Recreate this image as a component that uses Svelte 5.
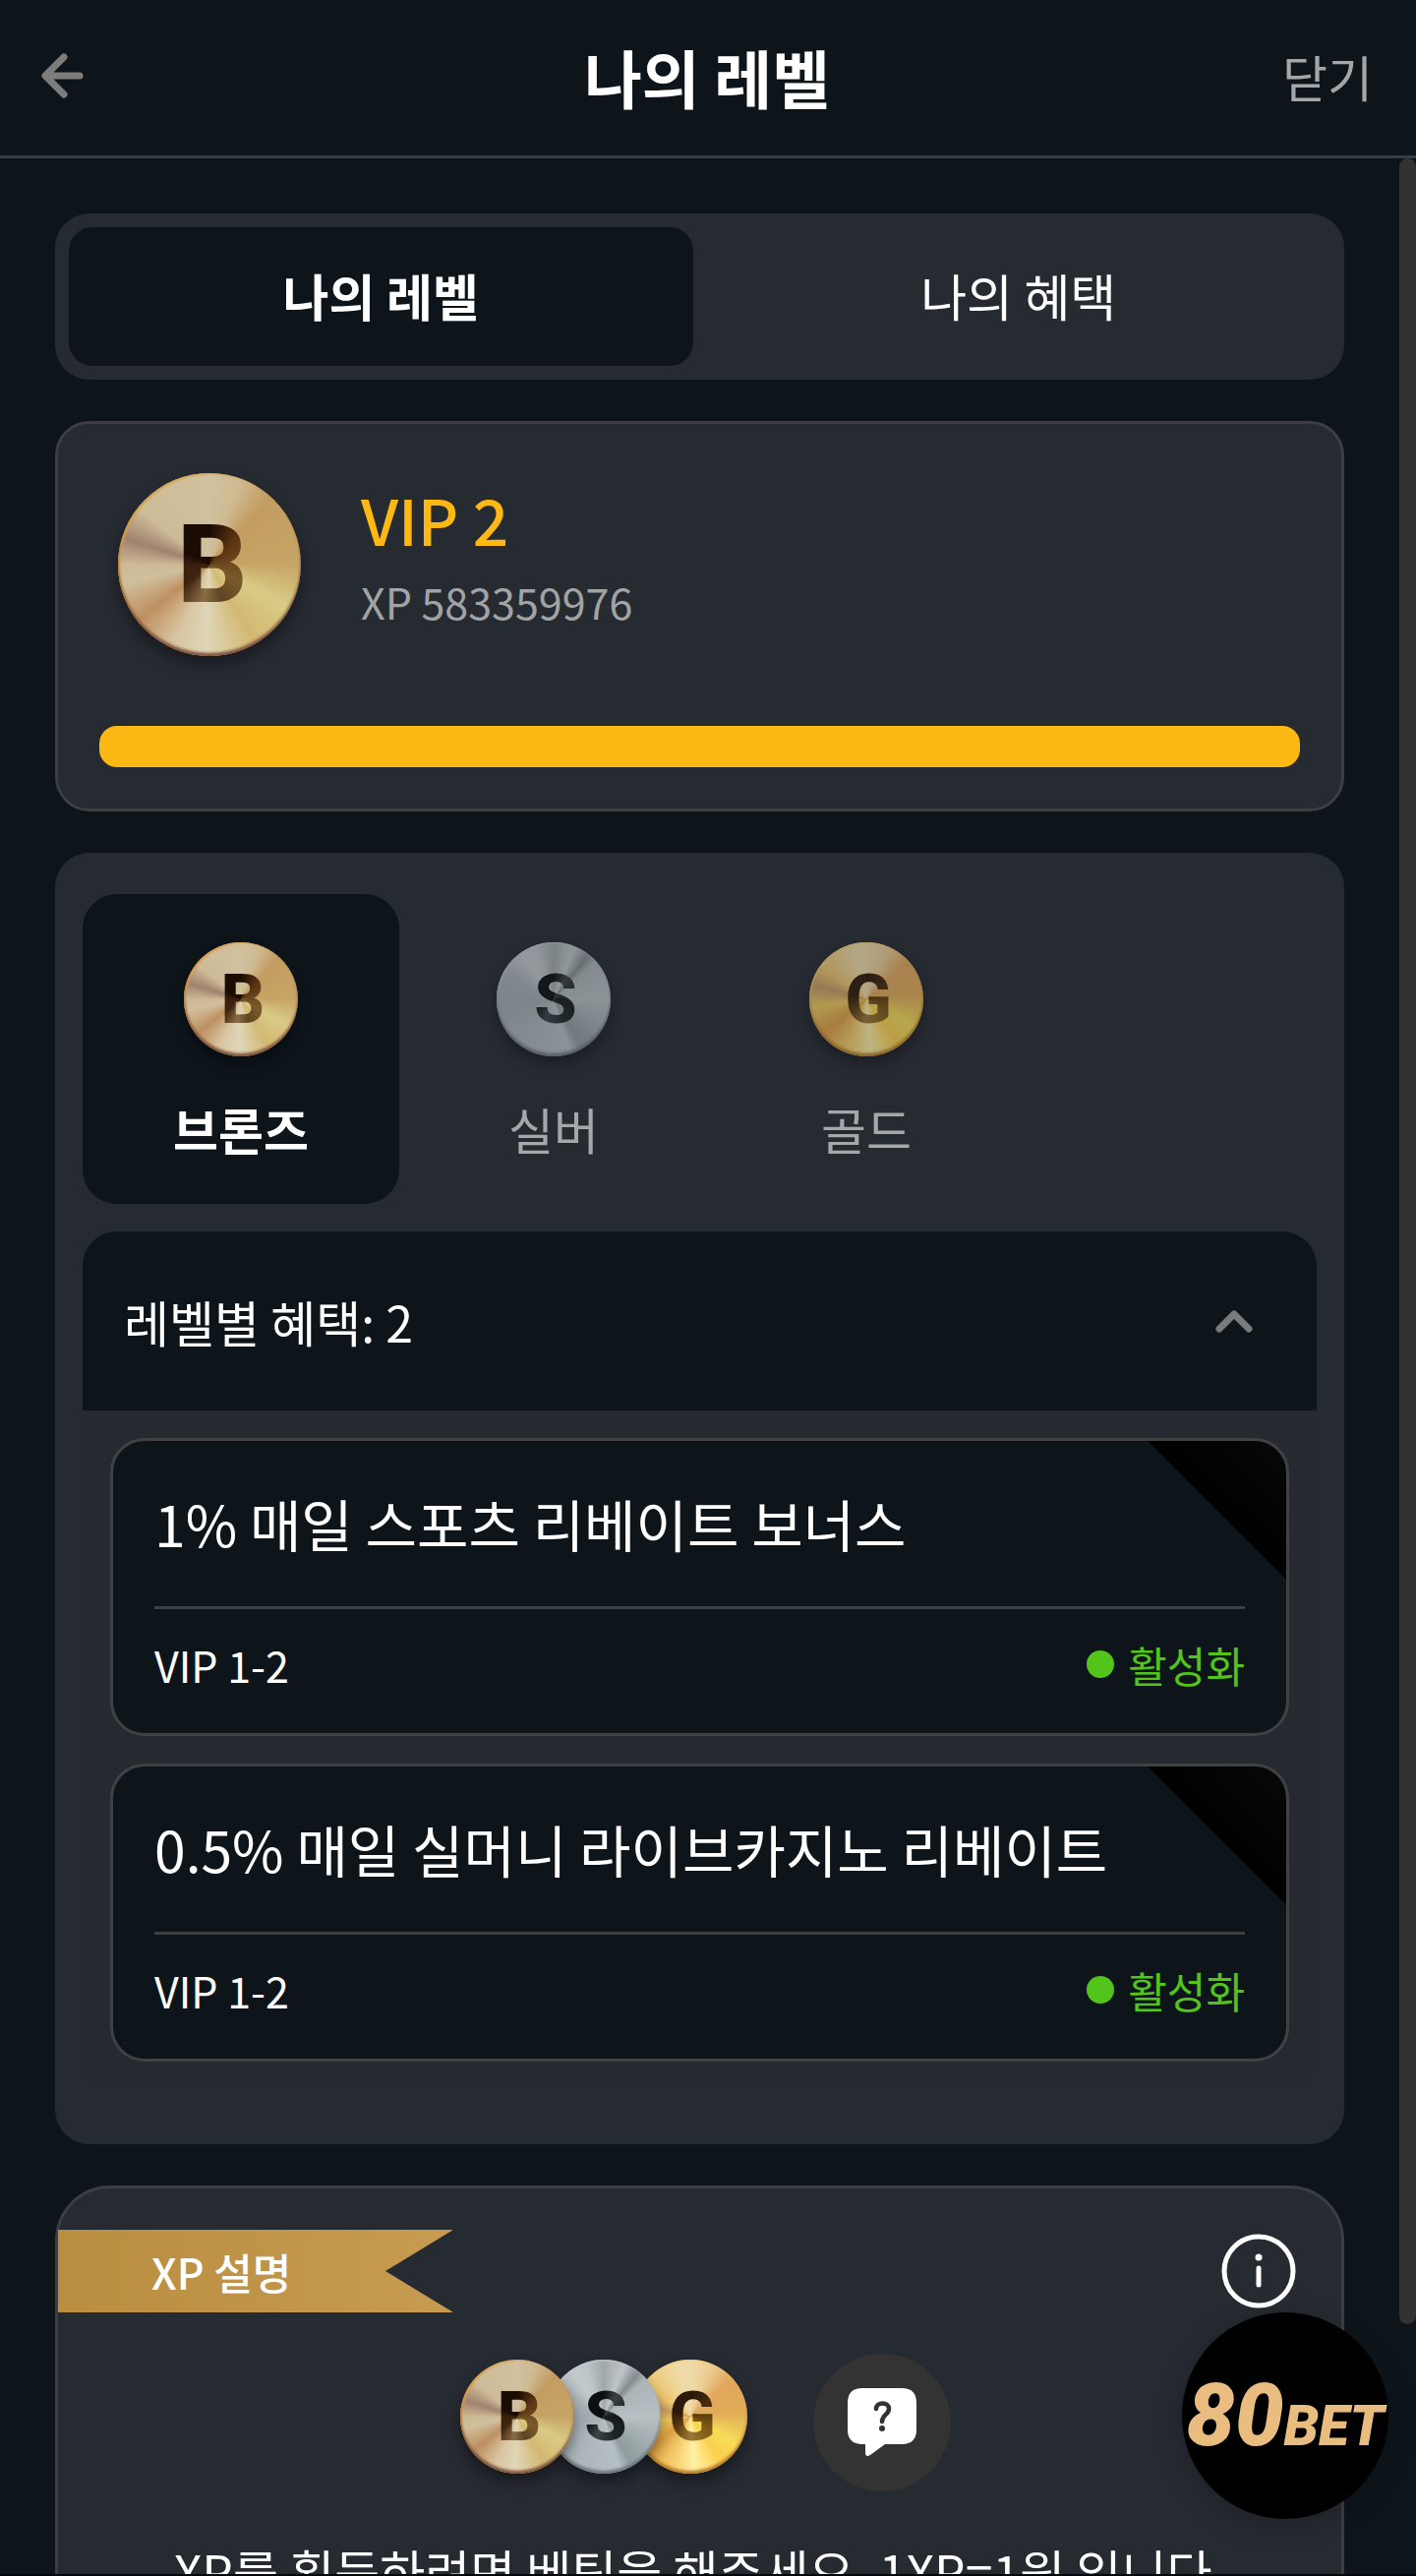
<script>
  const tiers = [
    { kind: 'bronze', letter: 'B', label: '브론즈' },
    { kind: 'silver', letter: 'S', label: '실버' },
    { kind: 'gold', letter: 'G', label: '골드' }
  ];
  const benefits = [
    { title: '1% 매일 스포츠 리베이트 보너스', range: 'VIP 1-2', status: '활성화' },
    { title: '0.5% 매일 실머니 라이브카지노 리베이트', range: 'VIP 1-2', status: '활성화' }
  ];
  let tab = $state('level');
  let tier = $state('bronze');
  let open = $state(true);
</script>

{#snippet coin(kind, letter, size)}
  <span class="coin {kind} {size}" aria-hidden="true">
    <span class="disc"><span class="letter">{letter}</span></span>
  </span>
{/snippet}

<div class="app">
  <header class="topbar">
    <button class="back" aria-label="뒤로">
      <svg width="44" height="46" viewBox="0 0 44 46" fill="none" stroke="currentColor" stroke-width="7" stroke-linecap="round" stroke-linejoin="round">
        <path d="M23 4 L4 23 L23 42 M5 23 H39" />
      </svg>
    </button>
    <h1>나의 레벨</h1>
    <button class="close">닫기</button>
  </header>

  <div class="body">
    <main>
      <div class="tabs" role="tablist">
        <button role="tab" aria-selected={tab === 'level'} class:active={tab === 'level'} onclick={() => (tab = 'level')}>나의 레벨</button>
        <button role="tab" aria-selected={tab === 'benefit'} class:active={tab === 'benefit'} onclick={() => (tab = 'benefit')}>나의 혜택</button>
      </div>

      <section class="vip">
        <div class="vip-head">
          {@render coin('bronze', 'B', 'lg')}
          <div class="vip-text">
            <h2>VIP 2</h2>
            <p>XP 583359976</p>
          </div>
        </div>
        <div class="bar"></div>
      </section>

      <section class="levels">
        <div class="tiers">
          {#each tiers as t}
            <button class="tier" class:active={tier === t.kind} onclick={() => (tier = t.kind)}>
              {@render coin(t.kind, t.letter, 'sm')}
              <span class="tier-label">{t.label}</span>
            </button>
          {/each}
        </div>
        <div class="accordion">
          <button class="acc-head" aria-expanded={open} onclick={() => (open = !open)}>
            <span>레벨별 혜택: 2</span>
            <svg width="38" height="24" viewBox="0 0 38 24" fill="none" stroke="currentColor" stroke-width="7" stroke-linecap="round" stroke-linejoin="round">
              <path d="M4 20 L19 5 L34 20" />
            </svg>
          </button>
          {#if open}
            <div class="acc-body">
              {#each benefits as b}
                <article class="benefit">
                  <h3>{b.title}</h3>
                  <div class="meta">
                    <span class="range">{b.range}</span>
                    <span class="status"><i class="dot"></i>{b.status}</span>
                  </div>
                </article>
              {/each}
            </div>
          {/if}
        </div>
      </section>

      <section class="xp">
        <div class="xp-head">
          <h2 class="ribbon">XP 설명</h2>
          <button class="info" aria-label="정보">
            <svg width="76" height="76" viewBox="0 0 76 76" fill="none" stroke="currentColor" stroke-linecap="round">
              <circle cx="38" cy="38" r="35" stroke-width="5" />
              <path d="M38 35 V52" stroke-width="5" />
              <circle cx="38" cy="24" r="3.5" fill="currentColor" stroke="none" />
            </svg>
          </button>
        </div>
        <div class="xp-row">
          <div class="stack">
            {#each tiers as t}
              {@render coin(t.kind, t.letter, 'sm')}
            {/each}
          </div>
          <button class="help" aria-label="도움말">
            <svg width="70" height="70" viewBox="0 0 70 70">
              <path d="M15 0 H55 Q70 0 70 15 V42 Q70 57 55 57 H38 L23 68 Q18 71 18 65 V57 H15 Q0 57 0 42 V15 Q0 0 15 0 Z" fill="#fff" />
              <path d="M29 21 C29 13.500 42 13.500 42 21 C42 27 35 27 35 34" fill="none" stroke="#333" stroke-width="4.500" stroke-linecap="round" />
              <circle cx="35" cy="41" r="3" fill="#333" />
            </svg>
          </button>
        </div>
        <p class="xp-text">XP를 획득하려면 베팅을 해주세요. 1XP=1원 입니다.</p>
      </section>
    </main>
    <div class="track"><div class="thumb"></div></div>
  </div>

  <button class="float" aria-label="80BET"><span class="num">80</span><span class="bet">BET</span></button>
</div>

<style>
  :global(body) {
    background: #0d151b;
  }
  .app {
    position: relative;
    box-sizing: border-box;
    height: 100vh;
    display: flex;
    flex-direction: column;
    overflow: hidden;
    border-bottom: 2px solid #05080b;
    background: #0d151b;
    color: #fff;
    font-family: 'Noto Sans CJK KR', sans-serif;
  }
  h1, h2, h3, p {
    margin: 0;
  }
  button {
    margin: 0;
    padding: 0;
    border: 0;
    background: none;
    color: inherit;
    font: inherit;
    cursor: pointer;
  }
  svg {
    display: block;
  }
  .topbar {
    flex: none;
    box-sizing: border-box;
    display: grid;
    grid-template-columns: 1fr auto 1fr;
    align-items: center;
    height: 161px;
    padding: 0 44px 5px 42px;
    border-bottom: 3px solid #3a3d40;
  }
  .back {
    justify-self: start;
    color: #7d7d7d;
  }
  h1 {
    font-size: 64px;
    line-height: 84px;
    font-weight: 700;
  }
  .close {
    justify-self: end;
    color: #a6a6a6;
    font-size: 50px;
    line-height: 70px;
  }
  .body {
    flex: 1;
    min-height: 0;
    display: flex;
  }
  main {
    flex: 1;
    min-width: 0;
    display: flex;
    flex-direction: column;
    gap: 42px;
    padding: 56px 56px 0;
    overflow: hidden;
  }
  main > * {
    flex: none;
  }
  .track {
    flex: none;
    width: 17px;
  }
  .thumb {
    height: 2202px;
    border-radius: 9px;
    background: #323232;
  }
  .tabs {
    display: flex;
    gap: 14px;
    padding: 14px;
    border-radius: 35px;
    background: #262a31;
  }
  .tabs button {
    flex: 1;
    height: 141px;
    padding-bottom: 4px;
    border-radius: 24px;
    font-size: 51px;
    line-height: 70px;
  }
  .tabs .active {
    background: #0d151b;
    font-weight: 700;
  }
  .vip {
    padding: 31px 42px 42px;
    border: 3px solid #3c3e41;
    border-radius: 35px;
    background: #262a31;
  }
  .vip-head {
    display: flex;
    align-items: center;
    gap: 42px;
    margin-bottom: 52px;
  }
  .vip-text {
    padding-bottom: 10px;
  }
  .vip h2 {
    color: #fdb813;
    font-size: 64px;
    line-height: 84px;
    font-weight: 500;
  }
  .vip p {
    color: #a2a3a5;
    font-size: 43px;
    line-height: 84px;
  }
  .bar {
    height: 42px;
    border-radius: 18px;
    background: #fdb813;
  }
  .levels {
    display: flex;
    flex-direction: column;
    gap: 28px;
    padding: 42px 28px 56px;
    border-radius: 35px;
    background: #262a31;
  }
  .tiers {
    display: grid;
    grid-template-columns: 322px 314px 322px;
  }
  .tier {
    display: flex;
    flex-direction: column;
    align-items: center;
    gap: 26px;
    padding: 37px 0 42px;
    border-radius: 35px;
    font-size: 50px;
    line-height: 70px;
    color: #a6a7a9;
  }
  .tier .coin {
    opacity: 0.7;
  }
  .tier.active {
    background: #0d151b;
    color: #fff;
    font-weight: 700;
  }
  .tier.active .coin {
    opacity: 1;
  }
  .accordion {
    border-radius: 35px;
    overflow: hidden;
    background: #262a30;
  }
  .acc-head {
    display: flex;
    align-items: center;
    justify-content: space-between;
    width: 100%;
    height: 182px;
    padding: 0 65px 0 42px;
    background: #0d151b;
    font-size: 50px;
    line-height: 70px;
  }
  .acc-head svg {
    color: #7a7a7a;
  }
  .acc-body {
    display: flex;
    flex-direction: column;
    gap: 28px;
    padding: 28px;
  }
  .benefit {
    padding: 0 42px 14px;
    border: 3px solid #3f4142;
    border-radius: 35px;
    background: linear-gradient(225deg, #080808 0, #000 99px, transparent 100px), #0d151b;
    background-clip: padding-box;
  }
  h3 {
    padding: 41px 0 43px;
    border-bottom: 3px solid #3d3f41;
    font-size: 57px;
    line-height: 84px;
    font-weight: 400;
  }
  .meta {
    display: flex;
    align-items: center;
    justify-content: space-between;
    height: 112px;
    font-size: 43px;
    line-height: 63px;
  }
  .status {
    display: flex;
    align-items: center;
    gap: 14px;
    color: #52c41a;
  }
  .dot {
    width: 28px;
    height: 28px;
    border-radius: 50%;
    background: #52c41a;
  }
  .xp {
    padding: 42px 0;
    border: 3px solid #3c3e41;
    border-radius: 56px;
    background: #262a31;
  }
  .xp-head {
    display: flex;
    align-items: center;
    justify-content: space-between;
    padding-right: 46px;
  }
  .ribbon {
    width: 307px;
    padding-left: 95px;
    background: linear-gradient(90deg, #b98e41, #c79b50);
    clip-path: polygon(0 0, 100% 0, 333px 50%, 100% 100%, 0 100%);
    font-size: 43px;
    line-height: 84px;
    font-weight: 500;
  }
  .xp-row {
    display: flex;
    justify-content: center;
    gap: 55px;
    margin-top: 42px;
  }
  .stack {
    display: flex;
    align-items: center;
    height: 128px;
  }
  .stack .coin + .coin {
    margin-left: -52px;
  }
  .stack .bronze {
    z-index: 3;
  }
  .stack .silver {
    z-index: 2;
  }
  .help {
    display: flex;
    align-items: center;
    justify-content: center;
    width: 140px;
    height: 140px;
    border-radius: 50%;
    background: #333;
  }
  .xp-text {
    margin-top: 42px;
    font-size: 50px;
    line-height: 77px;
    text-align: center;
    white-space: nowrap;
  }
  .coin {
    position: relative;
    flex: none;
    display: flex;
    align-items: center;
    justify-content: center;
  }
  .coin.sm {
    width: 140px;
    height: 140px;
    font-size: 70px;
  }
  .coin.lg {
    width: 224px;
    height: 224px;
    font-size: 111px;
  }
  .disc {
    display: flex;
    align-items: center;
    justify-content: center;
    width: 83%;
    height: 83%;
    border-radius: 50%;
  }
  .letter {
    padding-left: 4px;
    font-family: Roboto, sans-serif;
    font-weight: 800;
    line-height: 1;
    color: transparent;
    background-clip: text;
  }
  .lg .letter {
    padding-left: 6px;
  }
  .bronze .disc {
    background: conic-gradient(#d0c19f 0deg, #cfba91 20deg, #c39c62 42deg, #c7a565 90deg, #d8cb85 118deg, #d3b973 150deg, #dfd6b8 182deg, #d8c4a0 205deg, #be9060 232deg, #d0bf9d 258deg, #cdb995 270deg, #a1826f 287deg, #cdbb97 308deg, #d0c19f 360deg);
    box-shadow: inset 0 -3px 3px #7d4f38, inset 2px 1px 2px #d9a04a, 0 8px 14px rgba(0, 0, 0, 0.4);
  }
  .bronze .letter {
    background-image: conic-gradient(#1a0c03 0deg, #5c3413 45deg, #7a5a2a 120deg, #5e4523 160deg, #8a6d45 190deg, #3f2410 230deg, #3a200d 270deg, #1a0c03 300deg);
  }
  .silver .disc {
    background: conic-gradient(#a0a8ab 0deg, #bfc5c8 22deg, #848c8f 38deg, #abb4b7 48deg, #b8c0c3 90deg, #98a4a6 135deg, #909b9e 150deg, #b6c0c4 163deg, #adb6bb 210deg, #a2acb1 270deg, #a9b2b6 300deg, #c2c8cb 325deg, #bec5c8 340deg, #a0a8ab 360deg);
    box-shadow: inset 0 -3px 3px #69757b, inset 1px 1px 2px #c3cace, 0 8px 14px rgba(0, 0, 0, 0.4);
  }
  .silver .letter {
    background-image: conic-gradient(#0d1011 0deg, #3b4143 30deg, #15191a 90deg, #1f2526 150deg, #3c4446 200deg, #0d1011 250deg);
  }
  .gold .disc {
    background: conic-gradient(#efdba8 0deg, #ebcd94 22deg, #e1a75c 48deg, #e2ac58 85deg, #f6dd58 120deg, #fbd04c 145deg, #fff0a6 175deg, #f6cf6e 200deg, #dea044 232deg, #efc85c 262deg, #c49c66 285deg, #edc56c 305deg, #efdba8 345deg);
    box-shadow: inset 0 -3px 3px #b37a25, inset 1px 1px 2px #f3d17a, 0 8px 14px rgba(0, 0, 0, 0.4);
  }
  .gold .letter {
    background-image: conic-gradient(#261608 0deg, #4b2d0c 60deg, #7a5612 120deg, #9a7735 180deg, #5c3a10 230deg, #2c190a 290deg);
  }
  /* Support launcher floating above the page */
  .float {
    position: absolute;
    right: 28px;
    bottom: 56px;
    display: flex;
    align-items: baseline;
    justify-content: center;
    width: 210px;
    height: 210px;
    border-radius: 50%;
    background: #000;
    box-shadow: 0 7px 28px rgba(0, 0, 0, 0.2);
    color: #e9bd80;
    font-family: Roboto, sans-serif;
    font-style: italic;
    font-weight: 900;
    line-height: 210px;
    white-space: nowrap;
  }
  .num {
    font-size: 88px;
  }
  .bet {
    font-size: 57px;
  }
</style>
